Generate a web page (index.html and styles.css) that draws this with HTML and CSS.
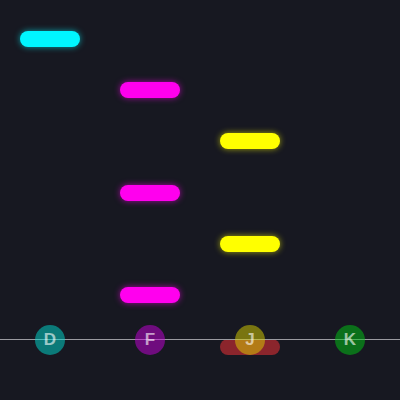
FILE: index.html
```html
<!DOCTYPE html>
<html>
<head>
<meta charset="utf-8">
<link rel="stylesheet" href="styles.css">
</head>
<body>
<div class="stage">
  <div class="note cyan" style="left:20px;top:31px"></div>
  <div class="note magenta" style="left:120px;top:82px"></div>
  <div class="note yellow" style="left:220px;top:133px"></div>
  <div class="note magenta" style="left:120px;top:185px"></div>
  <div class="note yellow" style="left:220px;top:236px"></div>
  <div class="note magenta" style="left:120px;top:287px"></div>
  <div class="note missed" style="left:220px;top:339px"></div>
  <div class="hitline"></div>
  <div class="keys">
    <div class="key k-d">D</div>
    <div class="key k-f">F</div>
    <div class="key k-j">J</div>
    <div class="key k-k">K</div>
  </div>
</div>
</body>
</html>
```
FILE: styles.css
```css
html, body {
  margin: 0;
  padding: 0;
  background: #171821;
  width: 400px;
  height: 400px;
  overflow: hidden;
}
.stage {
  position: relative;
  width: 400px;
  height: 400px;
}
.note {
  position: absolute;
  width: 60px;
  height: 16px;
  border-radius: 8px;
}
.cyan { background: #00f6ff; box-shadow: 0 0 6px rgba(0, 246, 255, 0.6); }
.magenta { background: #ff00ee; box-shadow: 0 0 6px rgba(255, 0, 238, 0.6); }
.yellow { background: #ffff00; box-shadow: 0 0 6px rgba(255, 255, 0, 0.6); }
.missed { background: rgba(255, 50, 55, 0.5); }
.hitline {
  position: absolute;
  left: 0;
  top: 339px;
  width: 400px;
  height: 1px;
  background: #9a9aa0;
}
.keys {
  position: absolute;
  left: 0;
  top: 325px;
  width: 400px;
  display: grid;
  grid-template-columns: repeat(4, 100px);
  justify-items: center;
}
.key {
  width: 30px;
  height: 30px;
  border-radius: 50%;
  display: flex;
  align-items: center;
  justify-content: center;
  font-family: "Liberation Sans", Arial, sans-serif;
  font-weight: bold;
  font-size: 17px;
  color: rgba(255, 255, 255, 0.6);
}
.k-d { background: rgba(0, 220, 210, 0.5); }
.k-f { background: rgba(200, 0, 220, 0.5); }
.k-j { background: rgba(220, 210, 0, 0.5); }
.k-k { background: rgba(0, 200, 20, 0.5); }
```
